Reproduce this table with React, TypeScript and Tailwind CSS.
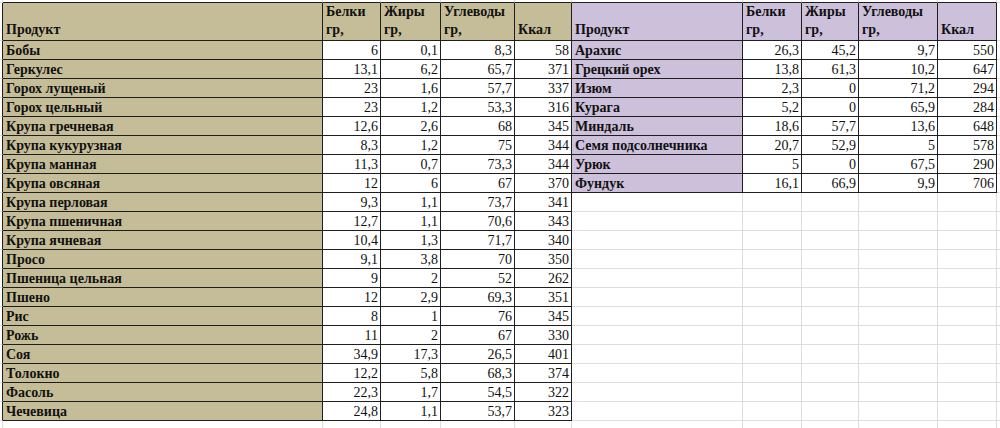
import React from "react";

const left: [string, string, string, string, string][] = [
  ["Бобы", "6", "0,1", "8,3", "58"],
  ["Геркулес", "13,1", "6,2", "65,7", "371"],
  ["Горох лущеный", "23", "1,6", "57,7", "337"],
  ["Горох цельный", "23", "1,2", "53,3", "316"],
  ["Крупа гречневая", "12,6", "2,6", "68", "345"],
  ["Крупа кукурузная", "8,3", "1,2", "75", "344"],
  ["Крупа манная", "11,3", "0,7", "73,3", "344"],
  ["Крупа овсяная", "12", "6", "67", "370"],
  ["Крупа перловая", "9,3", "1,1", "73,7", "341"],
  ["Крупа пшеничная", "12,7", "1,1", "70,6", "343"],
  ["Крупа ячневая", "10,4", "1,3", "71,7", "340"],
  ["Просо", "9,1", "3,8", "70", "350"],
  ["Пшеница цельная", "9", "2", "52", "262"],
  ["Пшено", "12", "2,9", "69,3", "351"],
  ["Рис", "8", "1", "76", "345"],
  ["Рожь", "11", "2", "67", "330"],
  ["Соя", "34,9", "17,3", "26,5", "401"],
  ["Толокно", "12,2", "5,8", "68,3", "374"],
  ["Фасоль", "22,3", "1,7", "54,5", "322"],
  ["Чечевица", "24,8", "1,1", "53,7", "323"],
];

const right: [string, string, string, string, string][] = [
  ["Арахис", "26,3", "45,2", "9,7", "550"],
  ["Грецкий орех", "13,8", "61,3", "10,2", "647"],
  ["Изюм", "2,3", "0", "71,2", "294"],
  ["Курага", "5,2", "0", "65,9", "284"],
  ["Миндаль", "18,6", "57,7", "13,6", "648"],
  ["Семя подсолнечника", "20,7", "52,9", "5", "578"],
  ["Урюк", "5", "0", "67,5", "290"],
  ["Фундук", "16,1", "66,9", "9,9", "706"],
];

const headers = [
  ["Продукт"],
  ["Белки", "гр,"],
  ["Жиры", "гр,"],
  ["Углеводы", "гр,"],
  ["Ккал"],
];

function cellContent(r: number, c: number): React.ReactNode {
  const inLeft = r >= 1 && r <= 21 && c >= 1 && c <= 5;
  const inRight = r >= 1 && r <= 9 && c >= 6 && c <= 10;
  if (!inLeft && !inRight) return null;
  const k = inLeft ? c - 1 : c - 6;
  if (r === 1) {
    const h = headers[k];
    return (
      <div className="flex h-full flex-col justify-end px-[3px] pb-[1px] font-bold leading-[18px]">
        {h.map((t) => (
          <span key={t}>{t}</span>
        ))}
      </div>
    );
  }
  const row = inLeft ? left[r - 2] : right[r - 2];
  const v = row[k];
  if (k === 0) {
    return <div className="flex h-full items-end px-[3px] font-bold leading-[16px] whitespace-nowrap">{v}</div>;
  }
  return <div className="flex h-full items-end justify-end pr-[2px] leading-[16px]">{v}</div>;
}

export default function App() {
  const cells: React.ReactNode[] = [];
  for (let r = 0; r <= 22; r++) {
    for (let c = 0; c <= 11; c++) {
      const inLeft = r >= 1 && r <= 21 && c >= 1 && c <= 5;
      const inRight = r >= 1 && r <= 9 && c >= 6 && c <= 10;
      const darkR = inLeft || inRight || (c === 0 && r >= 1 && r <= 21);
      const darkB = inLeft || inRight || (r === 0 && c >= 1 && c <= 10);
      const rCls = c === 11 ? "" : darkR ? "border-r border-r-[#1e1e1e]" : "border-r border-r-[#dedede]";
      const bCls = r === 22 ? "" : darkB ? "border-b border-b-[#1e1e1e]" : "border-b border-b-[#dedede]";
      let bg = "bg-white";
      if (inLeft && (r === 1 || c === 1)) bg = "bg-[#c4bd97]";
      if (inRight && (r === 1 || c === 6)) bg = "bg-[#ccc0da]";
      cells.push(
        <div key={`${r}-${c}`} className={`${rCls} ${bCls} ${bg} overflow-hidden`}>
          {cellContent(r, c)}
        </div>
      );
    }
  }
  return (
    <div
      className="h-[428px] w-[1000px] overflow-hidden bg-white text-[14px] text-[#111]"
      style={{ fontFamily: '"Liberation Serif", "Times New Roman", serif' }}
    >
      <div className="grid h-full grid-cols-[3px_320px_58px_60px_74px_57px_171px_59px_57px_79px_59px_1fr] grid-rows-[3px_38px_repeat(20,19px)_1fr]">
        {cells}
      </div>
    </div>
  );
}
